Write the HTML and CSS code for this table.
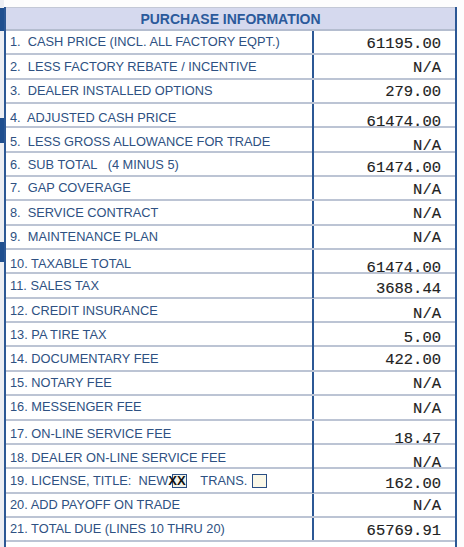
FILE: index.html
```html
<!DOCTYPE html>
<html>
<head>
<meta charset="utf-8">
<link rel="stylesheet" href="styles.css">
</head>
<body>
<div class="page">
  <div class="edge">
    <div class="edge-block b1"></div>
    <div class="edge-block b2"></div>
    <div class="edge-block b3"></div>
  </div>
  <div class="form">
    <div class="head">PURCHASE INFORMATION</div>
    <div class="rows">
      <div class="row"><div class="lbl">1.&nbsp; CASH PRICE (INCL. ALL FACTORY EQPT.)</div><div class="val">61195.00</div></div>
      <div class="row"><div class="lbl">2.&nbsp; LESS FACTORY REBATE / INCENTIVE</div><div class="val">N/A</div></div>
      <div class="row"><div class="lbl">3.&nbsp; DEALER INSTALLED OPTIONS</div><div class="val">279.00</div></div>
      <div class="row"><div class="lbl">4.&nbsp; ADJUSTED CASH PRICE</div><div class="val low">61474.00</div></div>
      <div class="row"><div class="lbl">5.&nbsp; LESS GROSS ALLOWANCE FOR TRADE</div><div class="val low">N/A</div></div>
      <div class="row"><div class="lbl">6.&nbsp; SUB TOTAL &nbsp; (4 MINUS 5)</div><div class="val mid">61474.00</div></div>
      <div class="row"><div class="lbl">7.&nbsp; GAP COVERAGE</div><div class="val">N/A</div></div>
      <div class="row"><div class="lbl">8.&nbsp; SERVICE CONTRACT</div><div class="val">N/A</div></div>
      <div class="row"><div class="lbl">9.&nbsp; MAINTENANCE PLAN</div><div class="val">N/A</div></div>
      <div class="row"><div class="lbl">10. TAXABLE TOTAL</div><div class="val low">61474.00</div></div>
      <div class="row"><div class="lbl">11. SALES TAX</div><div class="val mid">3688.44</div></div>
      <div class="row"><div class="lbl">12. CREDIT INSURANCE</div><div class="val mid">N/A</div></div>
      <div class="row"><div class="lbl">13. PA TIRE TAX</div><div class="val mid">5.00</div></div>
      <div class="row"><div class="lbl">14. DOCUMENTARY FEE</div><div class="val">422.00</div></div>
      <div class="row"><div class="lbl">15. NOTARY FEE</div><div class="val">N/A</div></div>
      <div class="row"><div class="lbl">16. MESSENGER FEE</div><div class="val">N/A</div></div>
      <div class="row"><div class="lbl">17. ON-LINE SERVICE FEE</div><div class="val low">18.47</div></div>
      <div class="row"><div class="lbl">18. DEALER ON-LINE SERVICE FEE</div><div class="val low">N/A</div></div>
      <div class="row"><div class="lbl">19. LICENSE, TITLE:&nbsp; NEW<span class="box"><span class="xx">XX</span></span><span class="trans">TRANS.</span><span class="box empty"></span></div><div class="val mid">162.00</div></div>
      <div class="row"><div class="lbl">20. ADD PAYOFF ON TRADE</div><div class="val">N/A</div></div>
      <div class="row"><div class="lbl">21. TOTAL DUE (LINES 10 THRU 20)</div><div class="val">65769.91</div></div>
    </div>
  </div>
</div>
</body>
</html>
```
FILE: styles.css
```css
html, body {
  margin: 0;
  padding: 0;
  background: #ffffff;
}

.page {
  display: flex;
  width: 464px;
  height: 547px;
  overflow: hidden;
  background: #fdfdfd;
}

.edge {
  width: 4px;
  flex: none;
  display: flex;
  flex-direction: column;
  background: #eceef3;
}

.edge-block {
  width: 4px;
  background: #1f4f8f;
}

.b1 { margin-top: 8px; height: 23px; }
.b2 { margin-top: 87px; height: 25px; }
.b3 { margin-top: 99px; height: 20px; }

.form {
  width: 453px;
  flex: none;
  margin-top: 7px;
  box-sizing: border-box;
  border-left: 2px solid #2c5895;
  border-right: 2px solid #2c5895;
  background: #ffffff;
}

.head {
  height: 24px;
  box-sizing: border-box;
  border-top: 1px solid #c3c8d6;
  border-bottom: 2px solid #b4bdcf;
  background: #d5d9ee;
  color: #2b5a9b;
  font-family: "Liberation Sans", Arial, sans-serif;
  font-weight: bold;
  font-size: 14px;
  display: flex;
  align-items: center;
  justify-content: center;
  padding-top: 1px;
}

.rows {
  display: flex;
  flex-direction: column;
}

.row {
  display: grid;
  grid-template-columns: 306px 1fr;
  height: 24.35px;
  box-sizing: border-box;
  border-bottom: 2px solid #bcc4d4;
}

.lbl {
  font-family: "Liberation Sans", Arial, sans-serif;
  font-size: 12.8px;
  color: #2e5182;
  padding-left: 4px;
  display: flex;
  align-items: center;
  white-space: nowrap;
  padding-bottom: 1px;
}

.val {
  border-left: 2px solid #2c5895;
  font-family: "Liberation Mono", "Courier New", monospace;
  font-size: 15.5px;
  color: #222222;
  display: flex;
  align-items: center;
  justify-content: flex-end;
  padding-right: 14px;
  padding-top: 3px;
  -webkit-text-stroke: 0.15px #222222;
}

.val.mid { padding-top: 6px; }
.val.low { padding-top: 9px; }

.box {
  display: inline-block;
  width: 13px;
  height: 12px;
  border: 1.5px solid #2b4f84;
  margin-left: 4px;
  position: relative;
  vertical-align: middle;
  background: #f3f3ea;
}

.xx {
  position: absolute;
  left: -5px;
  top: -2px;
  font-weight: bold;
  font-size: 13px;
  color: #111;
}

.trans {
  margin-left: 13px;
}

.box.empty {
  margin-left: 5px;
  background: #fbf8e8;
}
```
